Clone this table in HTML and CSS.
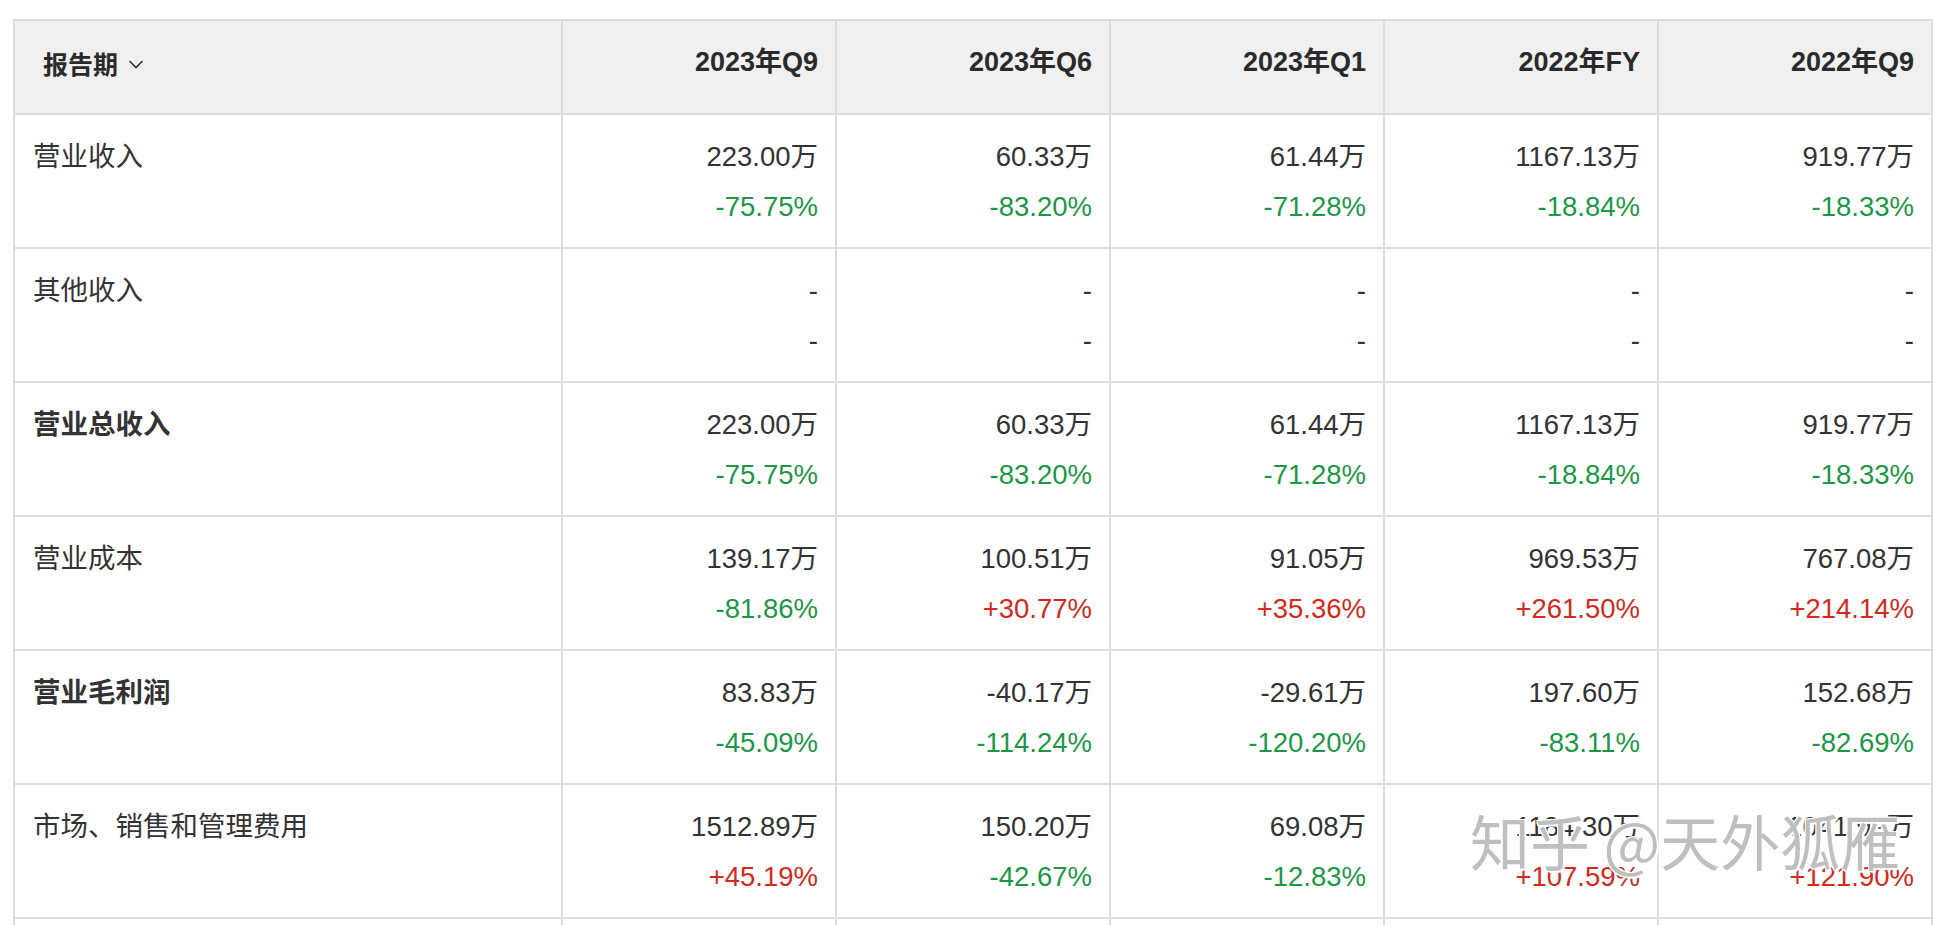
FILE: index.html
```html
<!DOCTYPE html>
<html lang="zh-CN">
<head>
<meta charset="utf-8">
<title>财务数据</title>
<link rel="stylesheet" href="styles.css">
</head>
<body>
<div class="wrap">
  <table class="fin">
    <colgroup>
      <col class="c-label">
      <col class="c-val"><col class="c-val"><col class="c-val"><col class="c-val"><col class="c-val">
    </colgroup>
    <thead>
      <tr>
        <th class="h-label"><span class="h-title">报告期</span><svg class="chev" width="16" height="10" viewBox="0 0 16 10"><path d="M1.5 2 L8 8.5 L14.5 2" fill="none" stroke="#333" stroke-width="1.6"/></svg></th>
        <th>2023年Q9</th>
        <th>2023年Q6</th>
        <th>2023年Q1</th>
        <th>2022年FY</th>
        <th>2022年Q9</th>
      </tr>
    </thead>
    <tbody>
      <tr>
        <td class="label">营业收入</td>
        <td><div>223.00万</div><div class="dn">-75.75%</div></td>
        <td><div>60.33万</div><div class="dn">-83.20%</div></td>
        <td><div>61.44万</div><div class="dn">-71.28%</div></td>
        <td><div>1167.13万</div><div class="dn">-18.84%</div></td>
        <td><div>919.77万</div><div class="dn">-18.33%</div></td>
      </tr>
      <tr>
        <td class="label">其他收入</td>
        <td><div>-</div><div>-</div></td>
        <td><div>-</div><div>-</div></td>
        <td><div>-</div><div>-</div></td>
        <td><div>-</div><div>-</div></td>
        <td><div>-</div><div>-</div></td>
      </tr>
      <tr>
        <td class="label strong">营业总收入</td>
        <td><div>223.00万</div><div class="dn">-75.75%</div></td>
        <td><div>60.33万</div><div class="dn">-83.20%</div></td>
        <td><div>61.44万</div><div class="dn">-71.28%</div></td>
        <td><div>1167.13万</div><div class="dn">-18.84%</div></td>
        <td><div>919.77万</div><div class="dn">-18.33%</div></td>
      </tr>
      <tr>
        <td class="label">营业成本</td>
        <td><div>139.17万</div><div class="dn">-81.86%</div></td>
        <td><div>100.51万</div><div class="up">+30.77%</div></td>
        <td><div>91.05万</div><div class="up">+35.36%</div></td>
        <td><div>969.53万</div><div class="up">+261.50%</div></td>
        <td><div>767.08万</div><div class="up">+214.14%</div></td>
      </tr>
      <tr>
        <td class="label strong">营业毛利润</td>
        <td><div>83.83万</div><div class="dn">-45.09%</div></td>
        <td><div>-40.17万</div><div class="dn">-114.24%</div></td>
        <td><div>-29.61万</div><div class="dn">-120.20%</div></td>
        <td><div>197.60万</div><div class="dn">-83.11%</div></td>
        <td><div>152.68万</div><div class="dn">-82.69%</div></td>
      </tr>
      <tr>
        <td class="label">市场、销售和管理费用</td>
        <td><div>1512.89万</div><div class="up">+45.19%</div></td>
        <td><div>150.20万</div><div class="dn">-42.67%</div></td>
        <td><div>69.08万</div><div class="dn">-12.83%</div></td>
        <td><div>1184.30万</div><div class="up">+107.59%</div></td>
        <td><div>1041.99万</div><div class="up">+121.90%</div></td>
      </tr>
      <tr class="stub">
        <td></td><td></td><td></td><td></td><td></td><td></td>
      </tr>
    </tbody>
  </table>
  <div class="watermark">知乎 @天外狐雁</div>
</div>
</body>
</html>
```

FILE: styles.css
```css
html, body {
  margin: 0;
  padding: 0;
  background: #ffffff;
}

body {
  font-family: "Liberation Sans", "Noto Sans CJK SC", sans-serif;
  color: #333333;
}

.wrap {
  position: relative;
  padding: 19px 0 0 13px;
}

.fin {
  border-collapse: collapse;
  table-layout: fixed;
  width: 1920px;
}

.c-label { width: 548px; }
.c-val { width: 274px; }

.fin th,
.fin td {
  border: 2px solid #dddddd;
  vertical-align: top;
}

.fin th {
  background: #f0f0f0;
  font-size: 27px;
  font-weight: bold;
  line-height: 30px;
  color: #2a2a2a;
  text-align: right;
  padding: 26px 17px 36px 17px;
}

.fin th.h-label {
  text-align: left;
  padding-left: 28px;
}

.h-title {
  font-size: 25px;
  position: relative;
  top: 3px;
}

.chev {
  margin-left: 10px;
  vertical-align: middle;
}

.fin td {
  font-size: 27.5px;
  line-height: 50px;
  text-align: right;
  padding: 17px 17px 15px 17px;
}

.fin td.label {
  text-align: left;
  padding-left: 18px;
}

.fin td.strong {
  font-weight: bold;
}

.fin .stub td {
  height: 100px;
}

.dn { color: #1b9846; }
.up { color: #d42a1d; }

.watermark {
  position: absolute;
  left: 1470px;
  top: 808px;
  font-family: "Noto Sans CJK SC", sans-serif;
  font-size: 60px;
  line-height: 64px;
  color: rgba(175, 175, 175, 0.8);
  text-shadow: 1px 1px 0 #fff, -1px -1px 0 #fff, 1px -1px 0 #fff, -1px 1px 0 #fff, 2px 2px 1px #fff;
  white-space: nowrap;
  pointer-events: none;
}
```
